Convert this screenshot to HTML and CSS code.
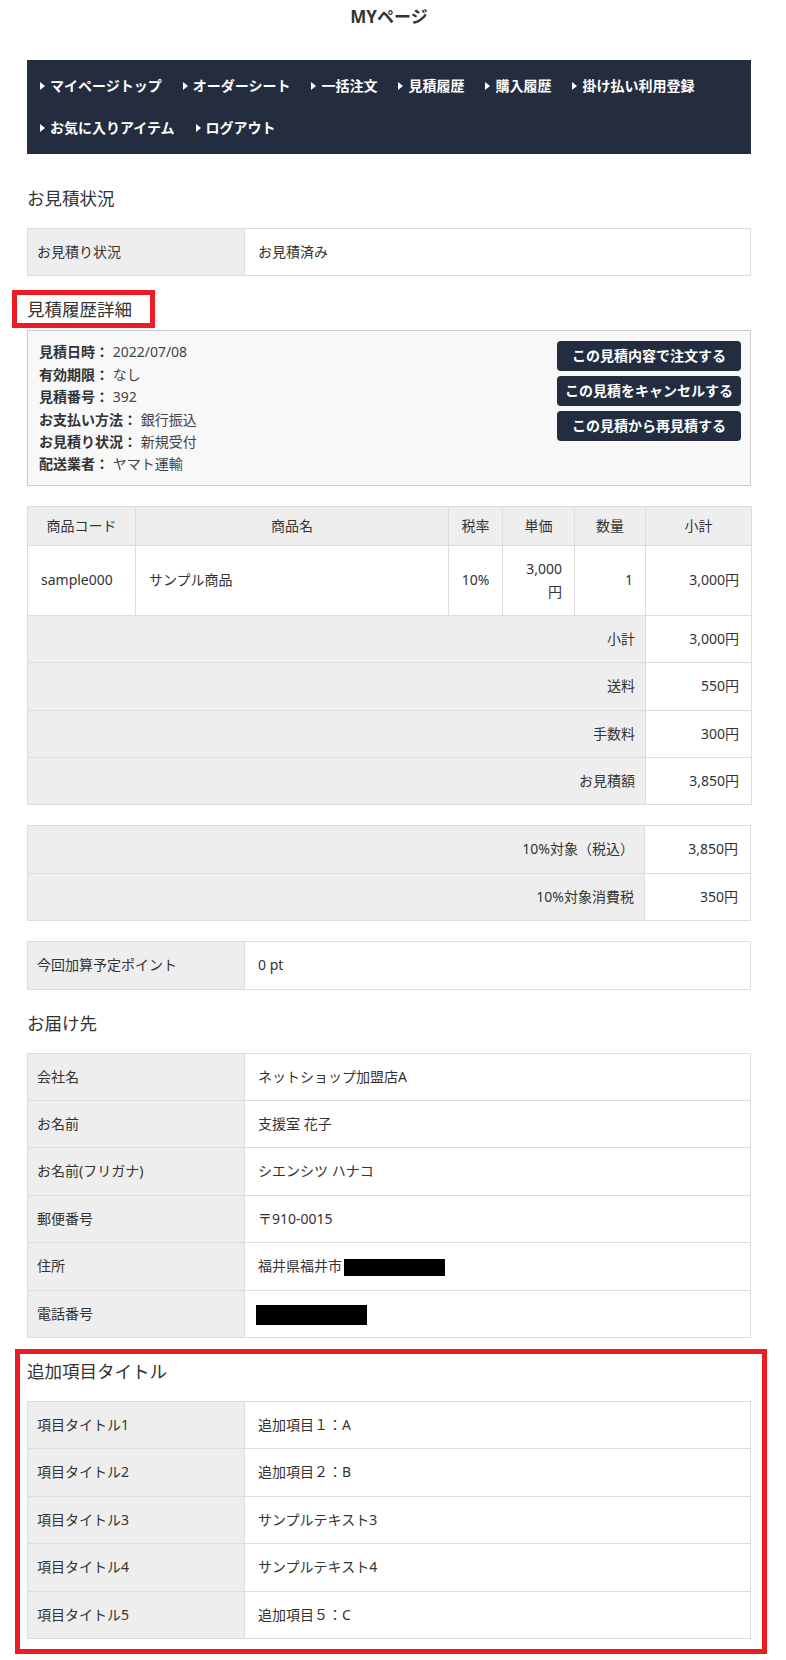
FILE: index.html
```html
<!DOCTYPE html>
<html lang="ja">
<head>
<meta charset="utf-8">
<title>MYページ</title>
<link rel="stylesheet" href="styles.css">
</head>
<body>
<div class="page">
  <h1 class="page-title">MYページ</h1>

  <nav class="nav">
    <ul class="nav-list">
      <li class="nav-item"><a href="#">マイページトップ</a></li>
      <li class="nav-item"><a href="#">オーダーシート</a></li>
      <li class="nav-item"><a href="#">一括注文</a></li>
      <li class="nav-item"><a href="#">見積履歴</a></li>
      <li class="nav-item"><a href="#">購入履歴</a></li>
      <li class="nav-item"><a href="#">掛け払い利用登録</a></li>
      <li class="nav-item"><a href="#">お気に入りアイテム</a></li>
      <li class="nav-item"><a href="#">ログアウト</a></li>
    </ul>
  </nav>

  <section class="section section--first">
    <h2 class="section-title">お見積状況</h2>
    <table class="kv">
      <tr><th>お見積り状況</th><td>お見積済み</td></tr>
    </table>
  </section>

  <section class="section">
    <h2 class="section-title section-title--tight">見積履歴詳細<span class="mark mark--heading"></span></h2>
    <div class="detail">
      <ul class="detail-list">
        <li><b>見積日時：</b> 2022/07/08</li>
        <li><b>有効期限：</b> なし</li>
        <li><b>見積番号：</b> 392</li>
        <li><b>お支払い方法：</b> 銀行振込</li>
        <li><b>お見積り状況：</b> 新規受付</li>
        <li><b>配送業者：</b> ヤマト運輸</li>
      </ul>
      <div class="detail-actions">
        <button class="btn" type="button">この見積内容で注文する</button>
        <button class="btn" type="button">この見積をキャンセルする</button>
        <button class="btn" type="button">この見積から再見積する</button>
      </div>
    </div>

    <table class="items">
      <colgroup>
        <col class="c-code"><col class="c-name"><col class="c-rate"><col class="c-price"><col class="c-qty"><col class="c-sub">
      </colgroup>
      <thead>
        <tr><th>商品コード</th><th>商品名</th><th>税率</th><th>単価</th><th>数量</th><th>小計</th></tr>
      </thead>
      <tbody>
        <tr class="product">
          <td>sample000</td>
          <td>サンプル商品</td>
          <td class="center">10%</td>
          <td class="num">3,000<br>円</td>
          <td class="num">1</td>
          <td class="num">3,000円</td>
        </tr>
        <tr><th colspan="5" class="sum-label">小計</th><td class="num">3,000円</td></tr>
        <tr><th colspan="5" class="sum-label">送料</th><td class="num">550円</td></tr>
        <tr><th colspan="5" class="sum-label">手数料</th><td class="num">300円</td></tr>
        <tr><th colspan="5" class="sum-label">お見積額</th><td class="num">3,850円</td></tr>
      </tbody>
    </table>

    <table class="totals">
      <colgroup><col><col class="c-sub"></colgroup>
      <tr><th class="sum-label">10%対象（税込）</th><td class="num">3,850円</td></tr>
      <tr><th class="sum-label">10%対象消費税</th><td class="num">350円</td></tr>
    </table>

    <table class="kv">
      <tr><th>今回加算予定ポイント</th><td>0 pt</td></tr>
    </table>
  </section>

  <section class="section">
    <h2 class="section-title">お届け先</h2>
    <table class="kv">
      <tr><th>会社名</th><td>ネットショップ加盟店A</td></tr>
      <tr><th>お名前</th><td>支援室 花子</td></tr>
      <tr><th>お名前(フリガナ)</th><td>シエンシツ ハナコ</td></tr>
      <tr><th>郵便番号</th><td>〒910-0015</td></tr>
      <tr><th>住所</th><td>福井県福井市<span class="redact redact--addr"></span></td></tr>
      <tr><th>電話番号</th><td><span class="redact redact--tel"></span></td></tr>
    </table>
  </section>

  <section class="section section--extra">
    <span class="mark mark--extra"></span>
    <h2 class="section-title">追加項目タイトル</h2>
    <table class="kv">
      <tr><th>項目タイトル1</th><td>追加項目１：A</td></tr>
      <tr><th>項目タイトル2</th><td>追加項目２：B</td></tr>
      <tr><th>項目タイトル3</th><td>サンプルテキスト3</td></tr>
      <tr><th>項目タイトル4</th><td>サンプルテキスト4</td></tr>
      <tr><th>項目タイトル5</th><td>追加項目５：C</td></tr>
    </table>
  </section>
</div>
</body>
</html>
```

FILE: styles.css
```css
* {
  box-sizing: border-box;
}

body {
  margin: 0;
  background: #fff;
  color: #333;
  font-family: "Noto Sans", "Noto Sans CJK JP", sans-serif;
  font-size: 14px;
  line-height: 1.6;
}

.page {
  width: 724px;
  margin-left: 27px;
  padding-top: 5px;
  padding-bottom: 20px;
}

.page-title {
  margin: 0;
  font-size: 17px;
  line-height: 24px;
  font-weight: bold;
  text-align: center;
  color: #333;
}

/* navigation */
.nav {
  margin-top: 31px;
  background: #232d3f;
  padding: 5px 13px;
}

.nav-list {
  list-style: none;
  margin: 0;
  padding: 0;
  display: flex;
  flex-wrap: wrap;
  column-gap: 21px;
}

.nav-item {
  display: flex;
  align-items: center;
  gap: 5px;
  line-height: 42px;
  font-weight: bold;
}

.nav-item::before {
  content: "";
  width: 0;
  height: 0;
  border-left: 5px solid #fff;
  border-top: 4px solid transparent;
  border-bottom: 4px solid transparent;
}

.nav-item a {
  color: #fff;
  text-decoration: none;
}

/* sections */
.section {
  position: relative;
}

.section-title {
  position: relative;
  margin: 20px 0 17px;
  font-size: 17.5px;
  line-height: 26px;
  font-weight: normal;
  color: #333;
}

.section--first .section-title {
  margin-top: 31px;
}

.section-title--tight {
  margin-bottom: 8px;
}

/* red annotation frames */
.mark {
  position: absolute;
  border: 5px solid #ed1c24;
  pointer-events: none;
}

.mark--heading {
  left: -15px;
  top: -6px;
  width: 143px;
  height: 38px;
}

.mark--extra {
  left: -12px;
  top: -9px;
  right: -16px;
  bottom: -15px;
}

/* key/value tables */
.kv,
.items,
.totals {
  width: 100%;
  border-collapse: collapse;
  table-layout: fixed;
  margin-bottom: 20px;
}

.kv th,
.kv td,
.items th,
.items td,
.totals th,
.totals td {
  border: 1px solid #ddd;
  padding: 12px 12px;
  vertical-align: middle;
  font-weight: normal;
  color: #333;
}

.kv th {
  width: 217px;
  background: #eee;
  text-align: left;
  padding-left: 9px;
}

.kv td {
  padding-left: 13px;
}

.section--extra .kv {
  margin-bottom: 0;
}

/* detail box */
.detail {
  display: flex;
  justify-content: space-between;
  align-items: flex-start;
  border: 1px solid #ccc;
  background: #f8f8f8;
  padding: 10px 9px 9px 11px;
  margin-bottom: 20px;
}

.detail-list {
  list-style: none;
  margin: 0;
  padding: 0;
  color: #444;
}

.detail-list b {
  color: #333;
}

.detail-actions {
  display: flex;
  flex-direction: column;
  gap: 5px;
  width: 184px;
}

.btn {
  display: block;
  width: 100%;
  height: 30px;
  padding: 0;
  border: none;
  border-radius: 4px;
  background: #232d3f;
  color: #fff;
  font-family: inherit;
  font-size: 14px;
  font-weight: bold;
  line-height: 30px;
  text-align: center;
  cursor: pointer;
}

/* items table */
.c-code { width: 108px; }
.c-name { width: 313px; }
.c-rate { width: 54px; }
.c-price { width: 72px; }
.c-qty { width: 71px; }
.c-sub { width: 106px; }

.items thead th {
  background: #eee;
  text-align: center;
  padding: 8px 6px;
}

.items .product td {
  padding: 12px 12px 12px 13px;
}

.center {
  text-align: center;
}

.items .product td.center {
  padding-left: 6px;
  padding-right: 6px;
}

.num {
  text-align: right;
}

.sum-label {
  background: #eee;
  text-align: right;
}

.items .sum-label,
.totals .sum-label {
  padding-right: 10px;
}

/* redactions */
.redact {
  display: inline-block;
  background: #000;
  vertical-align: middle;
}

.redact--addr {
  width: 101px;
  height: 17px;
  margin-left: 2px;
}

.redact--tel {
  width: 111px;
  height: 20px;
  margin-left: -2px;
}
```
